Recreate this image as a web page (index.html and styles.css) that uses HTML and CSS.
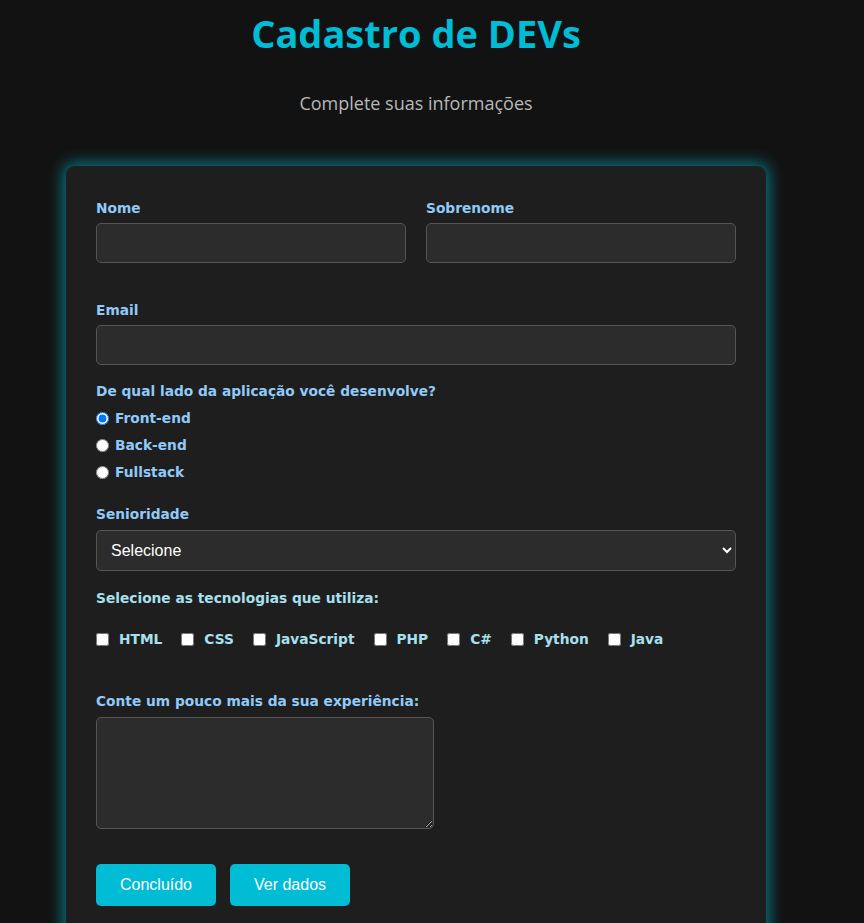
FILE: index.html
```html
<!DOCTYPE html>
<html lang="pt-BR">
<head>
<meta charset="utf-8">
<title>Cadastro de DEVs</title>
<link rel="stylesheet" href="styles.css">
</head>
<body>
<main class="page">
  <header class="head">
    <h1 class="title">Cadastro de DEVs</h1>
    <p class="subtitle">Complete suas informações</p>
  </header>
  <form class="card">
    <div class="row-two">
      <div class="field">
        <label class="lbl" for="nome">Nome</label>
        <input class="inp" id="nome" type="text">
      </div>
      <div class="field">
        <label class="lbl" for="sobrenome">Sobrenome</label>
        <input class="inp" id="sobrenome" type="text">
      </div>
    </div>
    <div class="field email">
      <label class="lbl" for="email">Email</label>
      <input class="inp" id="email" type="email">
    </div>
    <div class="group side">
      <p class="lbl">De qual lado da aplicação você desenvolve?</p>
      <label class="radio"><input type="radio" name="lado" checked><span>Front-end</span></label>
      <label class="radio"><input type="radio" name="lado"><span>Back-end</span></label>
      <label class="radio"><input type="radio" name="lado"><span>Fullstack</span></label>
    </div>
    <div class="field senior">
      <label class="lbl" for="sen">Senioridade</label>
      <select class="sel" id="sen">
        <option>Selecione</option>
      </select>
    </div>
    <div class="group techs">
      <p class="lbl tech-title">Selecione as tecnologias que utiliza:</p>
      <div class="checks">
        <label class="check"><input type="checkbox"><span>HTML</span></label>
        <label class="check"><input type="checkbox"><span>CSS</span></label>
        <label class="check"><input type="checkbox"><span>JavaScript</span></label>
        <label class="check"><input type="checkbox"><span>PHP</span></label>
        <label class="check"><input type="checkbox"><span>C#</span></label>
        <label class="check"><input type="checkbox"><span>Python</span></label>
        <label class="check"><input type="checkbox"><span>Java</span></label>
      </div>
    </div>
    <div class="field exp">
      <label class="lbl" for="exp">Conte um pouco mais da sua experiência:</label>
      <textarea class="txt" id="exp"></textarea>
    </div>
    <div class="actions">
      <button type="button" class="btn">Concluído</button>
      <button type="button" class="btn">Ver dados</button>
    </div>
  </form>
</main>
</body>
</html>
```
FILE: styles.css
```css
* { box-sizing: border-box; }
html, body { margin: 0; padding: 0; }
body {
  background: #121212;
  font-family: "Open Sans", "Noto Sans", sans-serif;
  color: #ddd;
  height: 923px;
  overflow: hidden;
}
.page {
  width: 700px;
  margin-left: 66px;
}
.head { text-align: center; }
.title {
  margin: 0;
  padding-top: 7px;
  font-size: 38px;
  line-height: 52px;
  font-weight: 700;
  color: #00bcd4;
}
.subtitle {
  margin: 32px 0 0;
  font-size: 18px;
  line-height: 24px;
  color: #b8b8b8;
}
.card {
  margin-top: 51px;
  background: #1e1e1e;
  border-radius: 9px;
  padding: 33px 30px 60px;
  box-shadow: 0 0 15px 3px rgba(0, 188, 212, 0.6);
}
.lbl {
  display: block;
  margin: 0;
  font-family: "DejaVu Sans", Verdana, sans-serif;
  font-weight: 700;
  font-size: 13.75px;
  line-height: 18px;
  color: #90caf9;
}
.field .lbl { margin-bottom: 6px; }
.row-two {
  display: grid;
  grid-template-columns: 1fr 1fr;
  gap: 20px;
}
.inp {
  display: block;
  width: 100%;
  height: 40px;
  background: #2c2c2c;
  border: 1px solid #555;
  border-radius: 5px;
  color: #fff;
  padding: 0 10px;
  font-size: 16px;
  outline: none;
}
.email { margin-top: 38px; }
.side { margin-top: 17px; }
.side .lbl { margin-bottom: 9px; }
.radio {
  display: flex;
  align-items: center;
  height: 18px;
  margin-bottom: 9px;
  font-family: "DejaVu Sans", Verdana, sans-serif;
  font-weight: 700;
  font-size: 13.75px;
  color: #90caf9;
}
.radio:last-child { margin-bottom: 0; }
.radio input {
  margin: 0 6px 0 0;
  width: 13px;
  height: 13px;
}
.senior { margin-top: 24px; }
.senior .lbl { margin-bottom: 7px; }
.sel {
  display: block;
  width: 100%;
  height: 41px;
  background: #2c2c2c;
  border: 1px solid #555;
  border-radius: 5px;
  color: #fff;
  padding: 0 10px;
  font-family: "Liberation Sans", Arial, sans-serif;
  font-size: 16px;
  color-scheme: dark;
}
.techs { margin-top: 18px; }
.tech-title { color: #a8e0ee; }
.checks {
  display: flex;
  align-items: center;
  margin-top: 23px;
  height: 18px;
}
.check {
  display: flex;
  align-items: center;
  margin-right: 19px;
  font-family: "DejaVu Sans", Verdana, sans-serif;
  font-weight: 700;
  font-size: 13.75px;
  color: #a8e0ee;
}
.check input {
  margin: 0 10px 0 0;
  width: 13px;
  height: 13px;
}
.exp { margin-top: 44px; }
.exp .lbl { margin-bottom: 7px; }
.txt {
  display: block;
  width: 338px;
  height: 112px;
  background: #2c2c2c;
  border: 1px solid #555;
  border-radius: 5px;
  color: #fff;
  resize: vertical;
  color-scheme: dark;
}
.actions {
  display: flex;
  gap: 14px;
  margin-top: 35px;
}
.btn {
  width: 120px;
  height: 42px;
  border: none;
  border-radius: 5px;
  background: #00bcd4;
  color: #fff;
  font-family: "Liberation Sans", Arial, sans-serif;
  font-size: 16px;
  cursor: pointer;
}
```
